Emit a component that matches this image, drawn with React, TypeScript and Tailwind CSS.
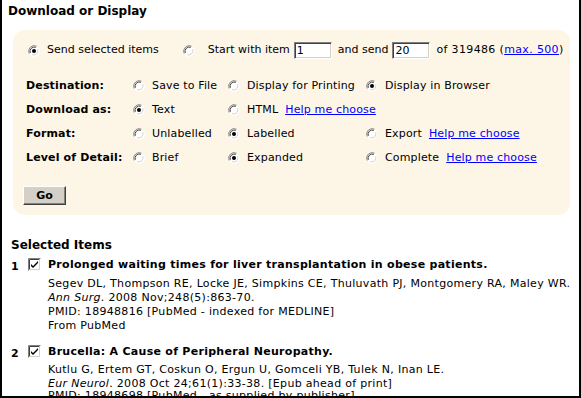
import React from "react";

function Radio({ checked = false }: { checked?: boolean }) {
  return (
    <svg width="12" height="12" viewBox="0 0 12 12" className="shrink-0 block">
      <circle cx="6" cy="6" r="5.5" fill="#ffffff" />
      <path d="M1.2 8.5 A5.5 5.5 0 0 1 8.5 1.2" fill="none" stroke="#808080" strokeWidth="1" />
      <path d="M2.3 7.8 A4.3 4.3 0 0 1 7.8 2.3" fill="none" stroke="#404040" strokeWidth="1" />
      <path d="M10.8 3.5 A5.5 5.5 0 0 1 3.5 10.8" fill="none" stroke="#ffffff" strokeWidth="1" />
      <path d="M9.7 4.2 A4.3 4.3 0 0 1 4.2 9.7" fill="none" stroke="#d4d0c8" strokeWidth="1" />
      {checked && <circle cx="6" cy="6" r="2" fill="#000000" />}
    </svg>
  );
}

function Checkbox() {
  return (
    <svg width="13" height="13" viewBox="0 0 13 13" className="shrink-0 block">
      <rect x="0" y="0" width="13" height="13" fill="#ffffff" />
      <path d="M0.5 12.5 V0.5 H12.5" fill="none" stroke="#808080" />
      <path d="M1.5 11.5 V1.5 H11.5" fill="none" stroke="#404040" />
      <path d="M1.5 11.5 H11.5 V1.5" fill="none" stroke="#d4d0c8" />
      <path d="M3 6 L5 8 L10 3 V5 L5 10 L3 8 Z" fill="#000000" />
    </svg>
  );
}

function Opt({ checked = false, label, link }: { checked?: boolean; label: string; link?: string }) {
  return (
    <div className="flex items-center">
      <Radio checked={checked} />
      <span className="ml-[7px]">{label}</span>
      {link && <a className="ml-[7px] text-[#0000ff] underline">{link}</a>}
    </div>
  );
}

function Input({ value }: { value: string }) {
  return (
    <div className="w-[38px] h-[17px] bg-white border border-t-[#808080] border-l-[#808080] border-r-white border-b-white shadow-[inset_1px_1px_0_#404040,inset_-1px_-1px_0_#d4d0c8] pl-[2px] leading-[15px]">
      {value}
    </div>
  );
}

export default function App() {
  return (
    <div className="w-[581px] h-[398px] overflow-hidden bg-white border-l-2 border-r-2 border-b-2 border-black font-['DejaVu_Sans',Verdana,sans-serif] text-[11px] text-black">
      <div className="pl-[6px] pt-[4px] text-[12px] font-bold leading-[15px]">Download or Display</div>
      <div className="ml-[11px] mr-[9px] mt-[11px] bg-[#fdf5e6] rounded-[12px] pt-[12px] pb-[10px] pl-[15px]">
        <div className="flex items-center h-[17px]">
          <Radio checked />
          <span className="ml-[7px]">Send selected items</span>
          <span className="ml-[24px]"><Radio /></span>
          <span className="ml-[13px]">Start with item</span>
          <span className="ml-[4px]"><Input value="1" /></span>
          <span className="ml-[6px]">and send</span>
          <span className="ml-[4px]"><Input value="20" /></span>
          <span className="ml-[6px] tracking-[0.35px]">of 319486 (<a className="text-[#0000ff] underline">max. 500</a>)</span>
        </div>
        <div className="mt-[15px] grid grid-cols-[107px_95px_138px_1fr] auto-rows-[24px] items-center -ml-[2px] tracking-[0.15px]">
          <div className="font-bold">Destination:</div>
          <Opt label="Save to File" />
          <Opt label="Display for Printing" />
          <Opt checked label="Display in Browser" />

          <div className="font-bold">Download as:</div>
          <Opt checked label="Text" />
          <div className="col-span-2"><Opt label="HTML" link="Help me choose" /></div>

          <div className="font-bold">Format:</div>
          <Opt label="Unlabelled" />
          <Opt checked label="Labelled" />
          <Opt label="Export" link="Help me choose" />

          <div className="font-bold">Level of Detail:</div>
          <Opt label="Brief" />
          <Opt checked label="Expanded" />
          <Opt label="Complete" link="Help me choose" />
        </div>
        <button className="mt-[16px] -ml-[5px] w-[43px] h-[19px] bg-[#d4d0c8] font-bold text-[11px] border border-t-white border-l-white border-r-[#404040] border-b-[#404040] shadow-[inset_-1px_-1px_0_#808080] leading-[15px]">
          Go
        </button>
      </div>
      <div className="pl-[9px] mt-[23px] text-[12px] font-bold leading-[15px]">Selected Items</div>
      <div className="mt-[5px] flex flex-col gap-[12px]">
        <div className="flex pl-[9px]">
          <div className="w-[17px] font-bold pt-[3px] leading-[12px]">1</div>
          <Checkbox />
          <div className="ml-[7px] leading-[14px] tracking-[0.3px]">
            <div className="font-bold leading-[13px] tracking-[0.28px]">Prolonged waiting times for liver transplantation in obese patients.</div>
            <div className="mt-[6px]">Segev DL, Thompson RE, Locke JE, Simpkins CE, Thuluvath PJ, Montgomery RA, Maley WR.</div>
            <div><i>Ann Surg</i>. 2008 Nov;248(5):863-70.</div>
            <div>PMID: 18948816 [PubMed - indexed for MEDLINE]</div>
            <div>From PubMed</div>
          </div>
        </div>
        <div className="flex pl-[9px]">
          <div className="w-[17px] font-bold pt-[3px] leading-[12px]">2</div>
          <Checkbox />
          <div className="ml-[7px] leading-[14px] tracking-[0.3px]">
            <div className="font-bold leading-[13px] tracking-[0.28px]">Brucella: A Cause of Peripheral Neuropathy.</div>
            <div className="mt-[5px]">Kutlu G, Ertem GT, Coskun O, Ergun U, Gomceli YB, Tulek N, Inan LE.</div>
            <div><i>Eur Neurol</i>. 2008 Oct 24;61(1):33-38. [Epub ahead of print]</div>
            <div className="-mt-[2px]">PMID: 18948698 [PubMed - as supplied by publisher]</div>
          </div>
        </div>
      </div>
    </div>
  );
}
